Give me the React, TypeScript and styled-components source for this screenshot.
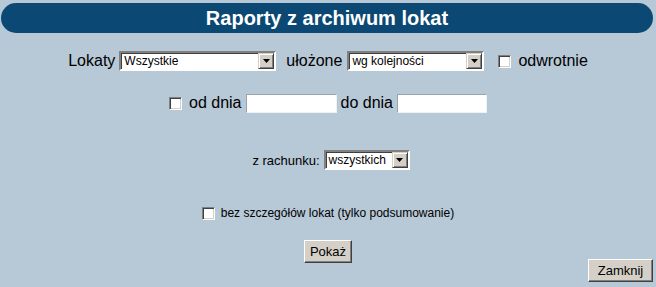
import React from 'react';
import styled, { createGlobalStyle } from 'styled-components';

const GlobalStyle = createGlobalStyle`
  html, body {
    margin: 0;
    padding: 0;
    background: #b7c8d7;
  }
  body {
    font-family: "Liberation Sans", Arial, sans-serif;
    color: #000;
  }
`;

const Page = styled.div`
  width: 656px;
  height: 287px;
  display: flex;
  flex-direction: column;
  overflow: hidden;
`;

const TitleBar = styled.div`
  margin: 3px 3px 0 1px;
  height: 30px;
  border-radius: 15px;
  background: #0b4873;
  color: #fff;
  font-weight: bold;
  font-size: 20px;
  display: flex;
  align-items: center;
  justify-content: center;
`;

const Row = styled.div<{ $top: number; $height: number; $shift?: number }>`
  margin-top: ${(p) => p.$top}px;
  height: ${(p) => p.$height}px;
  display: flex;
  align-items: center;
  justify-content: center;
  padding-left: ${(p) => (p.$shift || 0) * 2}px;
`;

const Label = styled.span<{ $size?: number; $l?: number; $r?: number }>`
  font-size: ${(p) => p.$size || 16}px;
  margin-left: ${(p) => p.$l || 0}px;
  margin-right: ${(p) => p.$r || 0}px;
  white-space: nowrap;
`;

const SelectBox = styled.div<{ $width: number }>`
  width: ${(p) => p.$width}px;
  height: 20px;
  box-sizing: border-box;
  display: flex;
  background: #fff;
  border: 2px solid;
  border-color: #808080 #fff #fff #808080;
  box-shadow: inset 1px 1px 0 #404040;
  flex-shrink: 0;
`;

const SelectText = styled.span`
  flex: 1;
  font-size: 12px;
  line-height: 16px;
  padding-left: 3px;
  white-space: nowrap;
  overflow: hidden;
`;

const ArrowButton = styled.span`
  width: 16px;
  height: 16px;
  box-sizing: border-box;
  background: #d4d0c8;
  border: 1px solid;
  border-color: #d4d0c8 #404040 #404040 #d4d0c8;
  box-shadow: inset 1px 1px 0 #fff, inset -1px -1px 0 #808080;
  display: flex;
  align-items: center;
  justify-content: center;
`;

const Check = styled.span<{ $l?: number; $r?: number }>`
  width: 13px;
  height: 13px;
  box-sizing: border-box;
  background: #fff;
  border: 1px solid;
  border-color: #808080 #fff #fff #808080;
  box-shadow: inset 1px 1px 0 #404040, inset -1px -1px 0 #d4d0c8;
  margin-left: ${(p) => p.$l || 0}px;
  margin-right: ${(p) => p.$r || 0}px;
  flex-shrink: 0;
`;

const TextInput = styled.input<{ $width: number }>`
  width: ${(p) => p.$width}px;
  height: 19px;
  box-sizing: border-box;
  background: #fff;
  border: 1px solid;
  border-color: #9aa3ab #eef2f5 #eef2f5 #9aa3ab;
  padding: 0 2px;
  font-size: 12px;
  font-family: inherit;
  outline: none;
  flex-shrink: 0;
`;

const Button = styled.button<{ $width: number }>`
  width: ${(p) => p.$width}px;
  height: 23px;
  box-sizing: border-box;
  background: #d4d0c8;
  border: 1px solid;
  border-color: #fff #404040 #404040 #fff;
  box-shadow: inset -1px -1px 0 #808080;
  font-family: "Liberation Sans", Arial, sans-serif;
  font-size: 13px;
  color: #000;
  padding: 0;
`;

const Footer = styled.div`
  margin-top: -4px;
  display: flex;
  justify-content: flex-end;
  padding-right: 3px;
`;

const Arrow = () => (
  <svg width="7" height="4" viewBox="0 0 7 4">
    <path d="M0 0h7L3.5 4z" fill="#000" />
  </svg>
);

const Select: React.FC<{ width: number; value: string }> = ({ width, value }) => (
  <SelectBox $width={width}>
    <SelectText>{value}</SelectText>
    <ArrowButton>
      <Arrow />
    </ArrowButton>
  </SelectBox>
);

const App: React.FC = () => {
  return (
    <>
      <GlobalStyle />
      <Page>
        <TitleBar>Raporty z archiwum lokat</TitleBar>

        <Row $top={17} $height={22}>
          <Label $r={4}>Lokaty</Label>
          <Select width={157} value="Wszystkie" />
          <Label $l={10} $r={5}>ułożone</Label>
          <Select width={137} value="wg kolejności" />
          <Check $l={14} $r={7} />
          <Label>odwrotnie</Label>
        </Row>

        <Row $top={20} $height={22}>
          <Check $r={7} />
          <Label $r={4}>od dnia</Label>
          <TextInput $width={91} />
          <Label $l={4} $r={4}>do dnia</Label>
          <TextInput $width={90} />
        </Row>

        <Row $top={35} $height={22} $shift={3}>
          <Label $size={13} $r={4}>z rachunku:</Label>
          <Select width={86} value="wszystkich" />
        </Row>

        <Row $top={35} $height={14}>
          <Check $r={6} />
          <Label $size={12}>bez szczegółów lokat (tylko podsumowanie)</Label>
        </Row>

        <Row $top={19} $height={24}>
          <Button $width={48}>Pokaż</Button>
        </Row>

        <Footer>
          <Button $width={65}>Zamknij</Button>
        </Footer>
      </Page>
    </>
  );
};

export default App;
